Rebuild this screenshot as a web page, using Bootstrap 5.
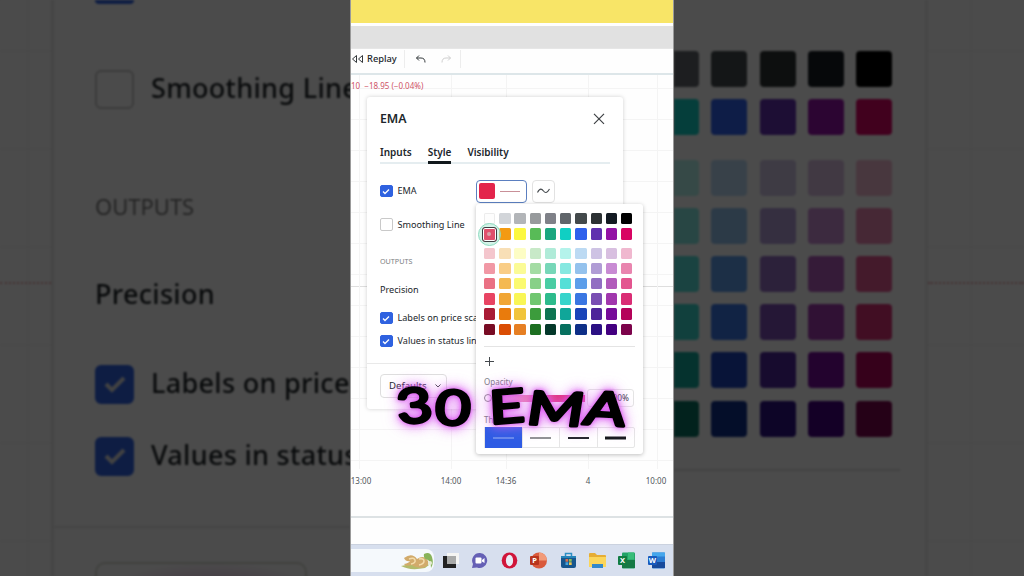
<!DOCTYPE html>
<html lang="en">
<head>
<meta charset="utf-8">
<meta name="viewport" content="width=device-width, initial-scale=1">
<title>EMA</title>
<link href="https://cdn.jsdelivr.net/npm/bootstrap@5.3.0/dist/css/bootstrap.min.css" rel="stylesheet">
<style>
body{width:1024px;height:576px;overflow:hidden;background:#4b4b4b;font-family:"Noto Sans","Open Sans",sans-serif;color:#20262b;font-size:9.1px;line-height:1}
.side{width:350px;overflow:hidden;flex:none}
.dim{height:576px;background-color:#fbfbfb;filter:brightness(.3) blur(.8px);
  background-image:linear-gradient(#f2f2f2,#f2f2f2),repeating-linear-gradient(#0000 0 50px,#f3f3f3 50px 52px,#0000 52px 98px);background-repeat:no-repeat,repeat}
.dim-l{background-size:2px 100%,auto;background-position:27px 0,0 0;padding-left:51px}
.dim-r{background-size:2px 100%,auto;background-position:296px 0,0 0}
.bigdlg{height:576px;background:#fbfbfb;border-left:3px solid #e6e6e6;padding-left:41px;color:#1c2024;font-size:27px;font-weight:500;white-space:nowrap;letter-spacing:.3px}
.bigrow{display:flex;align-items:center;gap:17px}
.bigrow>span+span{position:relative;top:-2px}
.bigbox{width:39px;height:39px;border-radius:6px;border:2px solid #c4c4c4;flex:none;display:flex;align-items:center;justify-content:center}
.bigbox.on,.chk.on{background:#2f62e0;border-color:#2f62e0}
.pline{height:0;border-top:2px dotted #e2a0a8;position:absolute;top:282px}
.bigpop{width:254px;height:576px;background:#fbfbfb;border-right:3px solid #e9e9e9;padding-top:51px}
.sw{display:grid;grid-template-columns:repeat(10,11.3px);gap:3.95px;padding-left:8px}
.sw i{height:11.3px;border-radius:1.5px;display:block}
.sw#s1 i:first-child{box-shadow:inset 0 0 0 1px #ececec}
.bigsw{display:grid;grid-template-columns:25px repeat(4,36px);column-gap:12.3px;row-gap:12.2px}
.bigsw i{height:36px;border-radius:4px;display:block}
.bigsw i:nth-child(5n+1){border-radius:0 4px 4px 0}
.phone{width:324px;height:576px;flex:none;background:#fefefe;overflow:hidden;position:relative;border-left:1px solid #9a9a9a;border-right:1px solid #9a9a9a}
.yl{height:23px;background:#f8e567}
.gr{height:22px;margin-top:3px;background:#e1e1e1}
.tools{height:27px;border-top:1px solid #e6e6e6;border-bottom:2px solid #dde6e9;font-size:9.3px;font-weight:500;padding-bottom:4px}
.chart{height:443px;position:relative;overflow:hidden;border-bottom:2px solid #dde2e4;
 background-image:linear-gradient(#f4f4f4,#f4f4f4),linear-gradient(#f4f4f4,#f4f4f4),linear-gradient(#f4f4f4,#f4f4f4),linear-gradient(#f4f4f4,#f4f4f4),linear-gradient(#f4f4f4,#f4f4f4),linear-gradient(#dedede,#dedede),repeating-linear-gradient(#0000 0 13px,#f4f4f4 13px 14px,#0000 14px 31px);
 background-size:1px 394px,1px 394px,1px 394px,1px 394px,1px 394px,100% 1px,100% 394px;background-position:8px 0,100px 0,155px 0,237px 0,306px 0,0 211px,0 0;background-repeat:no-repeat}
.quote{position:absolute;left:0;top:5px;font-size:8px;color:#cf5367;white-space:nowrap;line-height:12px}
.times span{position:absolute;top:400px;font-size:8px;line-height:12px;color:#50565b;transform:translateX(-50%)}
.dlg{position:absolute;left:16px;top:22px;width:256px;height:312px;background:#fff;border-radius:3px;box-shadow:0 0 4px #0000002e}
.dlg .in{padding:0 13px}
.ttl{height:44px;font-size:12.3px;font-weight:600}
.tabrow{height:23px;gap:16px;border-bottom:2px solid #e5edf0;font-size:10px;font-weight:600}
.tabrow span{height:23px;padding-top:6px}
.tabrow .act{border-bottom:3px solid #11181c}
.r{display:flex;align-items:center;gap:5px;white-space:nowrap}
.chk{width:12.5px;height:12.5px;border:1px solid #c9c9c9;border-radius:2px;display:flex;align-items:center;justify-content:center;flex:none}
.emalab{width:73px}
.colbtn{width:51px;height:23px;border:1.5px solid #5b7fc0;border-radius:4px;padding-left:2px;gap:5px;flex:none}
.colbtn b{width:16px;height:16px;background:#e3244b;border-radius:2px}
.colbtn u{width:20px;height:1px;background:#c99098}
.wav{width:23px;height:23px;border:1px solid #e2e2e2;border-radius:4px;display:flex;align-items:center;justify-content:center}
.foot{height:45px;border-top:1px solid #e9e9e9}
.defb{width:67px;height:24px;border:1px solid #dedede;border-radius:4px;font-size:9.6px}
.pop{position:absolute;left:125px;top:129px;width:167px;height:250px;background:#fff;border-radius:3px;box-shadow:0 1px 4px #00000040;padding-top:9px}
.ring{position:absolute;left:2px;top:19px;width:23px;height:23px;border-radius:50%;border:1.5px solid #8fdcc2;background:#aee8d488}
.ring b{position:absolute;left:2.5px;top:2.5px;width:15px;height:15px;border:1.5px solid #3b3f42;border-radius:3px;background:#e0506c;box-shadow:inset 0 0 0 1px #fff}
.ring b::after{content:"";position:absolute;left:4px;top:4px;width:4px;height:4px;border-radius:50%;background:#d9a1ab}
.pl{margin:0 8px}
.sm8{font-size:8px;color:#777b80}
.opac{height:18px}
.pct{width:47px;border:1px solid #e4e4e4;border-radius:3px;font-size:8.3px;color:#33383c;padding-right:4px}
.thick{height:21px;border:1px solid #e6e6e6;border-radius:2px}
.thick span{flex:1;display:flex;align-items:center;justify-content:center;border-left:1px solid #e6e6e6}
.thick span.act{background:#2e5ce4;margin:-1px 0 -1px -1px}
.cap{position:absolute;left:30px;top:368px;filter:drop-shadow(0 0 2px #d32ce8a0) drop-shadow(0 0 4px #d84df0a0) drop-shadow(0 0 7px #dd70f4a0)}
.cap text{font-family:"Lato","DejaVu Sans",sans-serif;font-weight:400;stroke:#000;stroke-width:3.2px;stroke-linejoin:round;stroke-linecap:round;fill:#000}
.task{position:absolute;left:0;right:0;bottom:0;height:32px;background:#d7dfee;border-top:1px solid #cbd2df}
.srch{width:83px;height:23px;background:#f5f9fc;border-radius:0 8px 8px 0}
.apps{gap:12.4px;padding-left:8px;padding-bottom:1px}
.apps svg{width:17px;height:17px;flex:none;display:block}
</style>
</head>
<body class="d-flex">
<aside class="side position-relative"><div class="dim dim-l"><div class="pline" style="left:0;width:51px"></div><div class="bigdlg position-relative">
  <div style="height:3px"><div class="bigbox on" style="height:3px;border-radius:0 0 6px 6px"></div></div>
  <div class="bigrow" style="height:173px"><span class="bigbox"></span><span>Smoothing Line</span></div>
  <div style="height:62px;font-size:22px;font-weight:400;letter-spacing:0;color:#777;line-height:61px"><span>OUTPUTS</span></div>
  <div style="height:114px;line-height:112px"><span>Precision</span></div>
  <div class="bigrow" style="height:64px"><span class="bigbox on"><svg width="24" height="20" viewBox="0 0 24 20"><path d="M3 10l6 6L21 4" fill="none" stroke="#ddd" stroke-width="4"/></svg></span><span>Labels on price</span></div>
  <div class="bigrow" style="height:80px"><span class="bigbox on"><svg width="24" height="20" viewBox="0 0 24 20"><path d="M3 10l6 6L21 4" fill="none" stroke="#ddd" stroke-width="4"/></svg></span><span>Values in status</span></div>
  <div style="height:30px"></div>
  <div style="border-top:2px solid #e6e6e6;margin-left:-41px;height:36px"></div>
  <div style="height:40px;width:212px;border:2px solid #d5dad0;border-radius:10px;background:radial-gradient(ellipse at 55% 110%,#d59ad0,#fbfbfb 75%)"></div>
</div></div></aside>

<main class="phone">
  <div class="yl"></div><div class="gr"></div>
  <div class="tools d-flex align-items-center">
    <svg width="13" height="10" viewBox="0 0 13 10" fill="none" stroke="#33383b"><path d="M5.500 1.500v7L1.500 5zM11.500 1.500v7L7.500 5z"/></svg>
    <span style="margin-left:3px;width:29px">Replay</span>
    <span style="width:1px;height:18px;background:#ededed;margin:0 10px 0 8px"></span>
    <svg width="11" height="9" viewBox="0 0 11 9" fill="none" stroke="#33383b"><path d="M4 .5L1.500 3 4 5.500M1.500 3h4.500q4 0 4 4.500"/></svg>
    <svg width="11" height="9" viewBox="0 0 11 9" fill="none" stroke="#cfcfcf" style="margin-left:15px"><path d="M7 .5L9.500 3 7 5.500M9.500 3H5q-4 0-4 4.500"/></svg>
    <span style="width:1px;height:18px;background:#ededed;margin-left:8px"></span>
  </div>
  <div class="chart">
    <div class="quote">10&nbsp; −18.95 (−0.04%)</div>
    <div class="times"><span style="left:10px">13:00</span><span style="left:100px">14:00</span><span style="left:155px">14:36</span><span style="left:237px">4</span><span style="left:305px">10:00</span></div>
    <section class="dlg">
      <div class="in">
        <div class="ttl d-flex align-items-center justify-content-between"><span>EMA</span><svg width="20" height="12" viewBox="0 0 20 12"><path d="M4 .8l10 10M14 .8L4 10.800" stroke="#3d4144" stroke-width="1.200"/></svg></div>
        <nav class="tabrow d-flex"><span>Inputs</span><span class="act">Style</span><span>Visibility</span></nav>
        <div class="r" style="height:32px;margin-top:11px"><span class="chk on"><svg width="8" height="7" viewBox="0 0 8 7"><path d="M1 3.500l2 2L7 1.500" fill="none" stroke="#fff" stroke-width="1.300"/></svg></span><span class="emalab">EMA</span>
          <span class="colbtn d-flex align-items-center"><b></b><u></u></span><span class="wav"><svg width="13" height="8" viewBox="0 0 13 8"><path d="M.5 5.500C3 .5 5 2 6.500 4S10 6.500 12.500 2" fill="none" stroke="#44494d" stroke-width="1.100"/></svg></span></div>
        <div class="r" style="height:35px"><span class="chk"></span><span>Smoothing Line</span></div>
        <div class="r" style="height:28px;margin-top:6px;font-size:7.2px;color:#7a7e82">OUTPUTS</div>
        <div class="r" style="height:28px">Precision</div>
        <div class="r" style="height:28px"><span class="chk on"><svg width="8" height="7" viewBox="0 0 8 7"><path d="M1 3.500l2 2L7 1.500" fill="none" stroke="#fff" stroke-width="1.300"/></svg></span><span>Labels on price scale</span></div>
        <div class="r" style="height:18px;margin-bottom:13px"><span class="chk on"><svg width="8" height="7" viewBox="0 0 8 7"><path d="M1 3.500l2 2L7 1.500" fill="none" stroke="#fff" stroke-width="1.300"/></svg></span><span>Values in status line</span></div>
      </div>
      <div class="foot in d-flex align-items-center"><div class="defb d-flex align-items-center justify-content-between px-1"><span class="ps-1">Defaults</span><svg width="8" height="6" viewBox="0 0 8 6"><path d="M1.500 1.500L4 4l2.500-2.500" fill="none" stroke="#44494d"/></svg></div></div>
    </section>
    <section class="pop">
      <div class="sw" id="s1"></div><div class="sw" id="s2" style="margin-top:8px"></div>
      <div class="ring"><b></b></div>
      <div class="pl" style="margin-top:11px;border-top:1px solid #e4e4e4;height:30px;padding-top:9px"><svg width="11" height="11" viewBox="0 0 11 11" class="d-block"><path d="M5.500 1v9M1 5.500h9" stroke="#44494d"/></svg></div>
      <div class="pl sm8" style="height:13px;padding-top:2px">Opacity</div>
      <div class="pl opac d-flex align-items-center"><span style="width:8px;height:8px;border:1px solid #888;border-radius:50%"></span><span style="height:7px;width:93px;margin-right:2px;background:linear-gradient(90deg,#f7dce6,#e02f74 70%)"></span><span class="pct h-100 d-flex align-items-center justify-content-end">100%</span></div>
      <div class="pl sm8" style="height:20px;padding-top:9px">Thickness</div>
      <div class="pl thick d-flex"><span class="act"><svg width="21" height="4"><path d="M0 2h21" stroke="#9db6f4"/></svg></span><span><svg width="21" height="4"><path d="M0 2h21" stroke="#55585c" stroke-width="1.300"/></svg></span><span><svg width="21" height="4"><path d="M0 2h21" stroke="#22262a" stroke-width="2"/></svg></span><span><svg width="21" height="4"><path d="M0 2h21" stroke="#14171a" stroke-width="3"/></svg></span></div>
    </section>
  </div>
  <svg class="cap" width="270" height="80" viewBox="0 0 270 80">
    <text transform="translate(18 56) scale(1.27 1)" font-size="48" rotate="-6 3">30</text>
    <text transform="translate(109 56) skewX(-5) scale(1.33 1)" font-size="46" rotate="-6 3 4">EMA</text>
  </svg>
  <footer class="task d-flex align-items-center">
    <div class="srch d-flex align-items-center justify-content-end"><svg width="34" height="18" viewBox="0 0 34 18"><path d="M1 14q9 5 24 2l4-3-6-4-12 3z" fill="#b2bb6b"/><path d="M4 6q8-6 13 1 7-5 11 2 2 5-6 7-8-1-10-3-7 2-8-1 5-1 6-3-4 1-6-3z" fill="#d2ab6b"/><path d="M9 7q5-2 6 1t-4 4M19 7q5-1 5 2t-5 4" fill="none" stroke="#f3dcab" stroke-width="1.500"/><path d="M24 2q6-3 8 3 2 7-1 11 0-6-3-8-5-1-4-6z" fill="#88b359"/><circle cx="30" cy="11" r="2" fill="#e8ecd5"/></svg></div>
    <div class="apps d-flex align-items-center">
      <svg viewBox="0 0 17 17"><rect x="5" y="1" width="12" height="11" fill="#f5f5f3"/><path d="M1 4h4v8h9v4H1z" fill="#222"/><rect x="5" y="4" width="9" height="8" fill="#a9aaa9"/></svg>
      <svg viewBox="0 0 17 17"><path d="M9 1a7.500 7.500 0 1 1-3 14.500L1 16l1-4A7.500 7.500 0 0 1 9 1z" fill="#6560b5"/><rect x="4.500" y="5.500" width="6" height="6" rx="1" fill="#fff"/><path d="M11 8l2.500-2v5L11 9.500z" fill="#fff"/></svg>
      <svg viewBox="0 0 17 17"><ellipse cx="8.500" cy="8.500" rx="7.800" ry="8" fill="#d01539"/><ellipse cx="8.500" cy="8.500" rx="3.600" ry="5.700" fill="#e7ecf5"/></svg>
      <svg viewBox="0 0 17 17"><circle cx="9" cy="8.500" r="8" fill="#d95a3c"/><path d="M9 .5a8 8 0 0 1 8 8H9z" fill="#f29a78"/><rect y="4" width="9" height="9" rx="1" fill="#b8341d"/><text x="2.300" y="11.300" font-size="7.500" font-weight="700" fill="#fff">P</text></svg>
      <svg viewBox="0 0 17 17"><path d="M5.500 4V1.500h6V4" fill="none" stroke="#2d8ec4" stroke-width="1.500"/><path d="M1 4h15v10q0 2-2 2H3q-2 0-2-2z" fill="#17568e"/><path d="M1 4h15v2H1z" fill="#2485b9"/><path d="M5.500 7h2.700v2.700H5.500z" fill="#d9714e"/><path d="M9 7h2.700v2.700H9z" fill="#8ac05b"/><path d="M5.500 10.300h2.700V13H5.500z" fill="#43a5df"/><path d="M9 10.300h2.700V13H9z" fill="#f0c54c"/></svg>
      <svg viewBox="0 0 17 17"><path d="M0 2q0-1 1-1h5l2 2h8q1 0 1 1v11H0z" fill="#e6ad35"/><path d="M0 5h17v10H0z" fill="#fbd65b"/><path d="M3 16v-4h11v4z" fill="#3388cb"/></svg>
      <svg viewBox="0 0 17 17"><rect x="4" y=".5" width="13" height="16" rx="1" fill="#21a366"/><path d="M4 8h13v8H4z" fill="#147945"/><path d="M10 .5h6v7h-6z" fill="#37bd79"/><rect y="4" width="9" height="9" rx="1" fill="#107c41"/><text x="2" y="11.300" font-size="7.500" font-weight="700" fill="#fff">X</text></svg>
      <svg viewBox="0 0 17 17"><rect x="4" y=".5" width="13" height="16" rx="1" fill="#2b7cd3"/><path d="M4 .5h13v4H4z" fill="#45a6ec"/><path d="M4 10h13v6H4z" fill="#174a9c"/><rect y="4" width="9" height="9" rx="1" fill="#185abd"/><text x=".7" y="11.300" font-size="7.500" font-weight="700" fill="#fff">W</text></svg>
    </div>
  </footer>
</main>

<aside class="side position-relative"><div class="dim dim-r"><div class="pline" style="left:254px;width:96px"></div><div class="bigpop position-relative">
  <div class="bigsw" id="b1"></div><div class="bigsw" id="b2" style="margin-top:24.500px"></div>
  <div style="margin-top:32px;width:226px;border-top:2px solid #dcdcdc"></div>
</div></div></aside>
<script src="https://cdn.jsdelivr.net/npm/bootstrap@5.3.0/dist/js/bootstrap.bundle.min.js"></script>
<script>
// Palette rows: greys, base hues, then tints and shades
const rows = [
 "fdfdfd d2d5d9 b2b5b8 979a9c 7f8188 60656a 43494b 2c3133 131a22 000000",
 "e3405f f39a12 fcf83f 58bb57 1ba77f 10cfc3 2e60ec 6030ae 9312a5 d80463",
 "f4c6cd f8dfb6 fdfdc5 c8e9c8 b0ebd8 b4f3eb bcdaf3 cec3e4 d8bfe0 f0b8cf",
 "f198a5 f9cd86 fbfb96 a4dca4 77d7b8 86e8e1 94c2ed b09cd5 c88bd3 e985af",
 "ea7184 f4b951 fbfa70 87d087 49cda3 55dfd7 5c9eea 916ec2 b15bbb e3558f",
 "e84463 f1a634 f9f656 70c770 2dbb8c 37d4cc 3a76e2 7a4eb3 a137ad da2d75",
 "a91b35 e97b0c f1c43b 3c9c3c 0e7552 10a699 1944b9 4d2499 760b99 b40259",
 "780c24 da4d04 e67f23 1d6f21 04382a 07705f 0e2f87 2b1083 430080 7c034b"
].map(r => r.split(" "));
const cells = a => a.map(c => `<i style="background:#${c}"></i>`).join("");
const fill = (id, list, from) => document.getElementById(id).innerHTML = list.map(r => cells(r.slice(from))).join("");
fill("s1", rows.slice(0, 2), 0); fill("s2", rows.slice(2), 0);
fill("b1", rows.slice(0, 2), 5); fill("b2", rows.slice(2), 5);
</script>
</body>
</html>
